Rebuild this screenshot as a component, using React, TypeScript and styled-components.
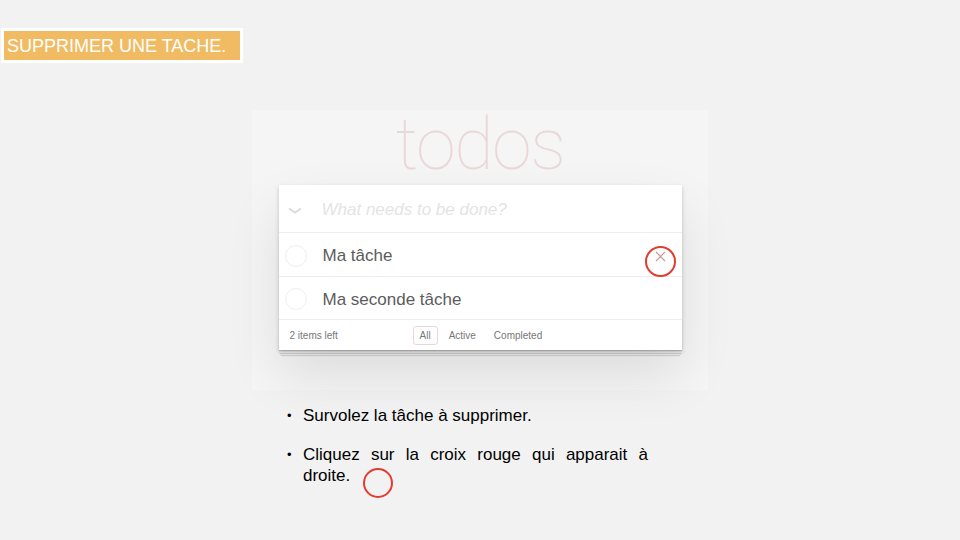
import styled, { createGlobalStyle } from 'styled-components';

const GlobalStyle = createGlobalStyle`
    html, body {
        margin: 0;
        padding: 0;
        background: #f2f2f2;
    }
    body {
        width: 960px;
        height: 540px;
        overflow: hidden;
        font-family: "Liberation Sans", Arial, sans-serif;
    }
`;

const Page = styled.div`
    display: flex;
    flex-direction: column;
    width: 960px;
    height: 540px;
`;

const SlideTitle = styled.div`
    align-self: flex-start;
    margin: 28px 0 0 1px;
    padding: 4px 14px 3px 3px;
    background: #f0bb63;
    border: 3px solid #ffffff;
    color: #ffffff;
    font-size: 18px;
    line-height: 22px;
`;

const Shot = styled.div`
    position: relative;
    z-index: 0;
    align-self: center;
    margin-top: 47px;
    width: 456px;
    height: 280px;
    background: #f5f5f5;
    display: flex;
    flex-direction: column;
    align-items: center;
`;

const Logo = styled.h1`
    margin: -5px 0 0;
    height: 80px;
    font-family: Roboto, "Liberation Sans", sans-serif;
    font-weight: 100;
    font-size: 72px;
    line-height: 79px;
    color: rgba(175, 47, 47, 0.15);
    letter-spacing: -1.5px;
`;

const Card = styled.section`
    position: relative;
    width: 403px;
    background: #ffffff;
    box-shadow: 0 2px 4px rgba(0, 0, 0, 0.2), 0 25px 50px rgba(0, 0, 0, 0.1);
`;

const Row = styled.div<{ $height: number }>`
    display: flex;
    align-items: center;
    height: ${({ $height }) => $height}px;
    border-bottom: 1px solid #ededed;
    position: relative;
`;

const Toggle = styled.div`
    width: 32px;
    margin-right: 11px;
    display: flex;
    justify-content: center;
    margin-top: 5px;
`;

const Placeholder = styled.div`
    margin-top: 3px;
    font-style: italic;
    font-weight: 300;
    font-size: 17px;
    color: #e4e4e4;
`;

const Check = styled.div`
    width: 20px;
    height: 20px;
    border: 1px solid #efefef;
    border-radius: 50%;
    margin: 2px 16px 0 6px;
`;

const Label = styled.div`
    margin-top: 3px;
    font-size: 17px;
    color: #5c5c5c;
    flex: 1;
`;

const Destroy = styled.div`
    position: absolute;
    right: 16px;
    top: 15px;
`;

const Footer = styled.footer`
    display: flex;
    align-items: center;
    height: 30px;
    padding: 0 11px;
    font-size: 10px;
    color: #777777;
    position: relative;
    &::before {
        content: '';
        position: absolute;
        left: 0;
        right: 0;
        bottom: 0;
        height: 30px;
        z-index: -1;
        box-shadow: 0 1px 1px rgba(0, 0, 0, 0.15), 0 4px 0 -1px #f6f6f6,
            0 5px 1px -1px rgba(0, 0, 0, 0.13), 0 7px 0 -2px #f6f6f6,
            0 8px 1px -2px rgba(0, 0, 0, 0.12);
    }
`;

const Count = styled.span`
    width: 123px;
`;

const Filters = styled.div`
    display: flex;
    gap: 4px;
`;

const Filter = styled.span<{ $selected?: boolean }>`
    padding: 3px 6px;
    border: 1px solid ${({ $selected }) => ($selected ? 'rgba(175, 47, 47, 0.2)' : 'transparent')};
    border-radius: 3px;
`;

const Ring = styled.div<{ $x: number; $y: number; $size: number }>`
    position: absolute;
    left: ${({ $x }) => $x}px;
    top: ${({ $y }) => $y}px;
    width: ${({ $size }) => $size}px;
    height: ${({ $size }) => $size}px;
    border: 2px solid #e53a2e;
    border-radius: 50%;
    box-sizing: border-box;
`;

const Notes = styled.ul`
    list-style: none;
    margin: 15px 0 0 287px;
    padding: 0;
    width: 361px;
    font-size: 17px;
    line-height: 21px;
    color: #000000;
`;

const Note = styled.li`
    display: flex;
    margin-bottom: 18px;
    position: relative;
`;

const Bullet = styled.span`
    width: 16px;
    flex: none;
    font-size: 13px;
`;

const NoteText = styled.span`
    flex: 1;
    text-align: justify;
`;

export default function App() {
    return (
        <Page>
            <GlobalStyle />
            <SlideTitle>SUPPRIMER UNE TACHE.</SlideTitle>
            <Shot>
                <Logo>todos</Logo>
                <Card>
                    <Row $height={47}>
                        <Toggle>
                            <svg width="14" height="8" viewBox="0 0 14 8">
                                <path d="M1 1.5 L7 5.5 L13 1.5" fill="none" stroke="#dcdcdc" strokeWidth="2" />
                            </svg>
                        </Toggle>
                        <Placeholder>What needs to be done?</Placeholder>
                    </Row>
                    <Row $height={43}>
                        <Check />
                        <Label>Ma tâche</Label>
                        <Destroy>
                            <svg width="11" height="11" viewBox="0 0 11 11">
                                <path d="M1 1 L10 10 M10 1 L1 10" stroke="#cc9a9a" strokeWidth="1.2" />
                            </svg>
                        </Destroy>
                        <Ring $x={366} $y={13} $size={31} />
                    </Row>
                    <Row $height={42}>
                        <Check />
                        <Label>Ma seconde tâche</Label>
                    </Row>
                    <Footer>
                        <Count>2 items left</Count>
                        <Filters>
                            <Filter $selected>All</Filter>
                            <Filter>Active</Filter>
                            <Filter>Completed</Filter>
                        </Filters>
                    </Footer>
                </Card>
            </Shot>
            <Notes>
                <Note>
                    <Bullet>•</Bullet>
                    <NoteText>Survolez la tâche à supprimer.</NoteText>
                </Note>
                <Note>
                    <Bullet>•</Bullet>
                    <NoteText>
                        Cliquez sur la croix rouge qui apparait à droite.
                    </NoteText>
                    <Ring $x={76} $y={24} $size={30} />
                </Note>
            </Notes>
        </Page>
    );
}
